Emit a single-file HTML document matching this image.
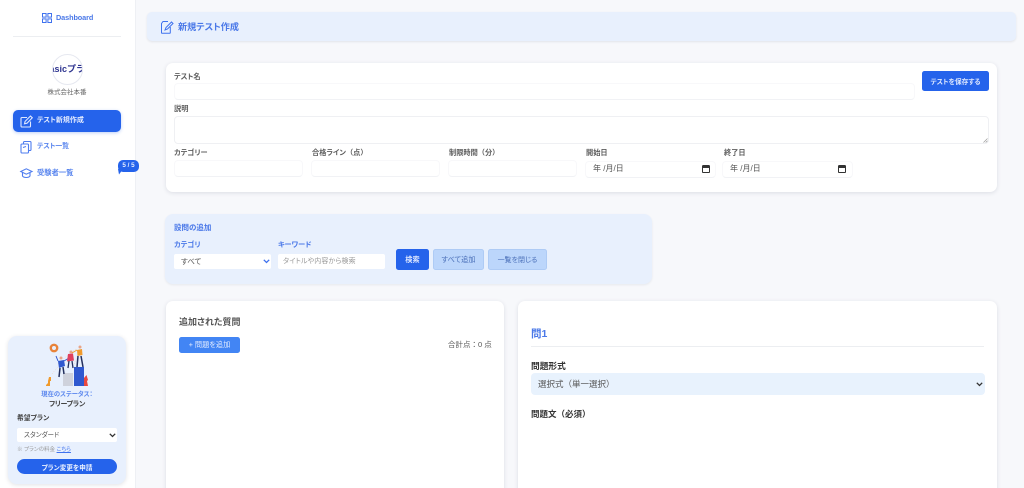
<!DOCTYPE html>
<html lang="ja"><head><meta charset="utf-8"><title>新規テスト作成</title>
<style>
*{box-sizing:border-box;margin:0;padding:0}
html,body{width:1024px;height:488px;overflow:hidden;background:#f7f8fb}
#w{position:relative;width:1024px;height:488px;overflow:hidden;background:#f7f8fb;font-family:"Liberation Sans","Noto Sans CJK JP",sans-serif;color:#444;font-feature-settings:"palt";filter:blur(.25px)}
.a{position:absolute;white-space:nowrap}
.l{font-size:7.200px;line-height:10px;font-weight:700;color:#5c5c5c}
.f{font-feature-settings:normal}
.card{position:absolute;background:#fff;border-radius:7px;box-shadow:0 1px 4px rgba(40,50,80,.13)}
.in{position:absolute;background:#fff;border:1px solid #f8f8fa;border-bottom-color:#f1f2f5;border-radius:4px}
.btn{position:absolute;display:flex;align-items:center;justify-content:center;font-size:7.200px;border-radius:2.500px;white-space:nowrap}
.nav{font-size:7px;line-height:10px;font-weight:700;color:#5a86ee}
svg{position:absolute;overflow:visible}
</style></head><body><div id="w">
<div class="a" style="left:0;top:0;width:136px;height:488px;background:#fff;border-right:1px solid #eef0f4"></div>

<svg style="left:42px;top:13px" width="10" height="10" fill="none" stroke="#3f72ee" stroke-width="1"><rect x=".5" y=".5" width="3.600" height="3.600"/><rect x="5.900" y=".5" width="3.600" height="3.600"/><rect x=".5" y="5.900" width="3.600" height="3.600"/><rect x="5.900" y="5.900" width="3.600" height="3.600"/></svg>
<div class="a nav" style="left:56px;top:13px;color:#4a78e8;font-size:7.300px;letter-spacing:-.1px">Dashboard</div>
<div class="a" style="left:13px;top:36px;width:108px;height:1px;background:#eceef1"></div>

<div class="a" style="left:52px;top:54px;width:31px;height:31px;border-radius:50%;border:1px solid #e6e8f0;background:#fff;overflow:hidden"><div class="a" style="left:-10px;top:9px;width:50px;text-align:center;font-size:9px;line-height:11px;font-weight:700;color:#2f3590;font-feature-settings:normal">Basicプラン</div></div>
<div class="a" style="left:27px;top:88px;width:80px;text-align:center;font-size:6.500px;line-height:10px;color:#666">株式会社本番</div>

<div class="a" style="left:13px;top:110px;width:108px;height:22px;border-radius:5px;background:#2563eb;box-shadow:0 1px 3px rgba(37,99,235,.3)"></div>
<svg style="left:20px;top:115px" width="13" height="13" fill="none" stroke="#dfe8ff" stroke-width="1.100"><path d="M7 2.500H2a1 1 0 0 0-1 1V11a1 1 0 0 0 1 1h7.500a1 1 0 0 0 1-1V6.500"/><path d="M4.500 8.800l.6-2.400L10.500 1l1.800 1.800L7 8.200z"/></svg>
<div class="a nav" style="left:37px;top:116px;color:#e4ecff">テスト新規作成</div>

<svg style="left:20px;top:141px" width="12" height="12" fill="none" stroke="#4f7def" stroke-width="1.100"><rect x="1" y="3" width="7.500" height="9" rx="1"/><path d="M3.500 3V1.500a1 1 0 0 1 1-1h5.500a1 1 0 0 1 1 1V8.500a1 1 0 0 1-1 1H8.500"/><path d="M3 6.500l3-1"/></svg>
<div class="a nav" style="left:37px;top:142px;font-size:6.800px">テスト一覧</div>

<svg style="left:20px;top:167px" width="13" height="12" fill="none" stroke="#4f7def" stroke-width="1.100"><path d="M.8 4.500L6.300 1.800l5.700 2.700-5.700 2.700z"/><path d="M2.500 5.500v3.500c1.200 2 6.300 2 7.500 0V5.500"/></svg>
<div class="a nav" style="left:37px;top:168px;font-size:7.300px">受験者一覧</div>

<div class="a" style="left:118px;top:160px;width:21px;height:12px;background:#2563eb;border-radius:5px;color:#e8efff;font-size:6.300px;line-height:12px;font-weight:700;text-align:center;font-feature-settings:normal">5 / 5</div>
<svg style="left:118px;top:169px" width="6" height="6"><path d="M0 0h5L1 5.500z" fill="#2563eb"/></svg>

<!-- plan card -->
<div class="a" style="left:8px;top:336px;width:118px;height:148px;border-radius:9px;background:#e8f0fd;box-shadow:0 1px 4px rgba(40,50,80,.14)"></div>
<svg style="left:44px;top:344px" width="46" height="44">
<path d="M14 20l10-9 8-6M8 30l10-12M30 20l6-14" stroke="#f0c9b0" stroke-width=".5" stroke-dasharray="1 1.500" fill="none"/>
<circle cx="10" cy="4" r="3.200" fill="none" stroke="#e8833a" stroke-width="2.400"/>
<path d="M7 33v4H6v5H2v-1l2-2v-2l1-4z" fill="#f09a2c"/>
<rect x="19" y="29" width="10" height="13" fill="#cfd2dc"/>
<rect x="30" y="23" width="10" height="19" fill="#2f58cf"/>
<path d="M40 42V34l2.500-3 1.500 5-1 1 1 5z" fill="#e8483f"/>
<circle cx="17" cy="14" r="1.500" fill="#e8a58a"/><path d="M14 17l6-1 1 6-6 2z" fill="#2f58cf"/><path d="M16 24l-1 9M19 23l1 7" stroke="#24305e" stroke-width="1.500"/><path d="M14 17l-2-5M20 17l5-3" stroke="#2f58cf" stroke-width="1"/>
<circle cx="27" cy="8" r="1.500" fill="#e8a58a"/><path d="M24 10l5-.5 1 7-7 1z" fill="#e0405e"/><path d="M25 17l-1 7M28 17l1 7" stroke="#24305e" stroke-width="1.300"/>
<circle cx="36" cy="3" r="1.500" fill="#e8a58a"/><path d="M33 6l5-1 .5 6-5 1z" fill="#f09a2c"/><path d="M34 12l-1 11M37 12l2 11" stroke="#24305e" stroke-width="1.500"/><path d="M33 6l-5 3" stroke="#f09a2c" stroke-width="1"/>
</svg>
<div class="a" style="left:8px;top:390px;width:118px;text-align:center;font-size:6.300px;line-height:10px;font-weight:700;color:#5a86ee">現在のステータス：</div>
<div class="a" style="left:8px;top:400px;width:118px;text-align:center;font-size:7px;line-height:10px;font-weight:700;color:#444;letter-spacing:-.3px">フリープラン</div>
<div class="a l" style="left:17px;top:414px;color:#444;font-size:6.800px">希望プラン</div>
<div class="a" style="left:17px;top:428px;width:100px;height:14px;background:#fff;border-radius:2px;font-size:6.600px;line-height:15px;padding-left:7px;color:#555">スタンダード</div>
<svg style="left:109px;top:433px" width="7" height="5" fill="none" stroke="#333" stroke-width="1.300"><path d="M.8.800l2.700 2.700L6.200.800"/></svg>
<div class="a" style="left:17px;top:446px;font-size:5.500px;line-height:9px;color:#999">※ プランの料金 <span style="color:#3f72ee;text-decoration:underline">こちら</span></div>
<div class="btn" style="left:17px;top:459px;width:100px;height:15px;border-radius:8px;background:#2563eb;color:#e9f0ff;font-weight:700;font-size:6.600px">プラン変更を申請</div>

<!-- header -->
<div class="a" style="left:147px;top:12px;width:869px;height:29px;border-radius:5px;background:#e8f0fd;box-shadow:0 1px 2px rgba(40,50,80,.1)"></div>
<svg style="left:160px;top:20px" width="14" height="14" fill="none" stroke="#3f72ee" stroke-width="1"><path d="M8 1.500H3L1.500 3.500V12.500a.8.800 0 0 0 .8.800H9.500a.8.800 0 0 0 .8-.8V7"/><path d="M5 10l1-2.500L11.500 2 13 3.500 7.500 9z"/></svg>
<div class="a" style="left:178px;top:21px;font-size:9.100px;line-height:13px;font-weight:700;color:#4a78e8">新規テスト作成</div>

<!-- form card -->
<div class="card" style="left:166px;top:63px;width:831px;height:129px"></div>
<div class="a l" style="left:174px;top:72px">テスト名</div>
<div class="in" style="left:174px;top:83px;width:741px;height:17px"></div>
<div class="btn" style="left:922px;top:71px;width:67px;height:20px;background:#2563eb;color:#dfe8ff;font-weight:700;font-size:6.700px">テストを保存する</div>
<div class="a l" style="left:174px;top:104px">説明</div>
<div class="in" style="left:174px;top:116px;width:815px;height:28px;border-color:#eff0f3"></div>
<svg style="left:983px;top:138px" width="5" height="5" stroke="#999" stroke-width=".7"><path d="M.5 4.500L4.500.5M2.700 4.500L4.500 2.700"/></svg>
<div class="a l" style="left:174px;top:148px">カテゴリー</div>
<div class="in" style="left:174px;top:160px;width:129px;height:17px"></div>
<div class="a l" style="left:312px;top:148px">合格ライン<span class="f">（点）</span></div>
<div class="in" style="left:311px;top:160px;width:129px;height:17px"></div>
<div class="a l" style="left:449px;top:148px">制限時間<span class="f">（分）</span></div>
<div class="in" style="left:448px;top:160px;width:129px;height:17px"></div>
<div class="a l" style="left:586px;top:148px">開始日</div>
<div class="in" style="left:585px;top:161px;width:131px;height:17px"></div>
<div class="a" style="left:593px;top:164px;font-size:8px;line-height:10px;color:#555;font-feature-settings:normal">年 /月/日</div>
<svg style="left:702px;top:165px" width="8" height="8"><rect x=".5" y=".5" width="7" height="7" rx=".8" fill="none" stroke="#333"/><rect x=".5" y=".5" width="7" height="2.500" fill="#333"/></svg>
<div class="a l" style="left:724px;top:148px">終了日</div>
<div class="in" style="left:722px;top:161px;width:131px;height:17px"></div>
<div class="a" style="left:730px;top:164px;font-size:8px;line-height:10px;color:#555;font-feature-settings:normal">年 /月/日</div>
<svg style="left:838px;top:165px" width="8" height="8"><rect x=".5" y=".5" width="7" height="7" rx=".8" fill="none" stroke="#333"/><rect x=".5" y=".5" width="7" height="2.500" fill="#333"/></svg>

<!-- add section -->
<div class="a" style="left:165px;top:214px;width:487px;height:70px;border-radius:8px;background:#e8f0fd;box-shadow:0 1px 2px rgba(40,50,80,.08)"></div>
<div class="a l" style="left:174px;top:223px;color:#4a78e8;font-size:7.500px">設問の追加</div>
<div class="a l" style="left:174px;top:240px;color:#4a78e8">カテゴリ</div>
<div class="a" style="left:174px;top:254px;width:97px;height:15px;background:#fff;border-radius:2px;font-size:7.500px;line-height:15px;padding-left:7px;color:#555">すべて</div>
<svg style="left:263px;top:259px" width="7" height="5" fill="none" stroke="#3f72ee" stroke-width="1.300"><path d="M.8.800l2.700 2.700L6.200.800"/></svg>
<div class="a l" style="left:278px;top:240px;color:#4a78e8">キーワード</div>
<div class="a" style="left:278px;top:254px;width:107px;height:15px;background:#fff;border-radius:2px;font-size:7px;line-height:15px;padding-left:5px;color:#999;letter-spacing:.1px">タイトルや内容から検索</div>
<div class="btn" style="left:396px;top:249px;width:33px;height:21px;background:#2563eb;color:#dfe8ff;font-weight:700">検索</div>
<div class="btn" style="left:433px;top:249px;width:51px;height:21px;background:#bcd6fb;color:#4a6fb8;border:1px solid #aecbf5">すべて追加</div>
<div class="btn" style="left:488px;top:249px;width:59px;height:21px;background:#bcd6fb;color:#4a6fb8;border:1px solid #aecbf5;font-size:7px">一覧を閉じる</div>

<!-- bottom cards -->
<div class="card" style="left:166px;top:301px;width:338px;height:200px"></div>
<div class="a" style="left:179px;top:316px;font-size:9px;line-height:13px;font-weight:700;color:#555">追加された質問</div>
<div class="btn" style="left:179px;top:337px;width:61px;height:16px;background:#4285f4;color:#e4edff">+ 問題を追加</div>
<div class="a" style="left:448px;top:340px;font-size:7.500px;line-height:10px;color:#555;font-feature-settings:normal">合計点：0 点</div>

<div class="card" style="left:518px;top:301px;width:479px;height:200px"></div>
<div class="a" style="left:531px;top:327px;font-size:10.500px;line-height:15px;font-weight:700;color:#4a78e8;font-feature-settings:normal">問1</div>
<div class="a" style="left:531px;top:346px;width:453px;height:1px;background:#eceef1"></div>
<div class="a" style="left:531px;top:361px;font-size:8.700px;line-height:11px;font-weight:700;color:#333;font-feature-settings:normal">問題形式</div>
<div class="a" style="left:531px;top:373px;width:454px;height:22px;background:#e8f2fd;border-radius:4px;font-size:8.500px;line-height:22px;padding-left:7px;color:#555;font-feature-settings:normal">選択式（単一選択）</div>
<svg style="left:976px;top:382px" width="7" height="5" fill="none" stroke="#333" stroke-width="1.300"><path d="M.8.800l2.700 2.700L6.200.800"/></svg>
<div class="a" style="left:531px;top:409px;font-size:8.500px;line-height:11px;font-weight:700;color:#333;font-feature-settings:normal">問題文（必須）</div>
</div></body></html>
